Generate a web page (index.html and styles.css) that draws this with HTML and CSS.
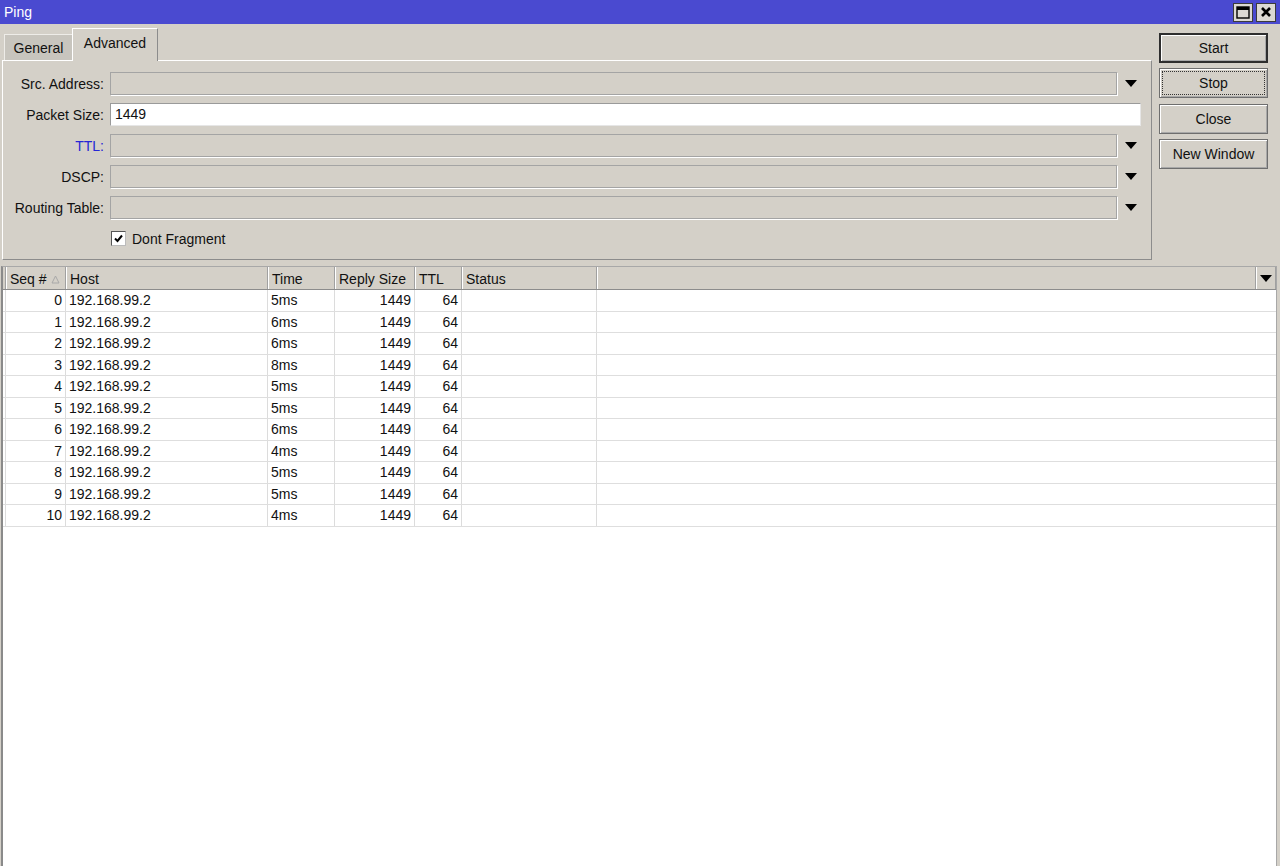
FILE: index.html
```html
<!DOCTYPE html>
<html lang="en">
<head>
    <meta charset="UTF-8">
    <title>Ping</title>
    <link rel="stylesheet" href="styles.css">
</head>
<body>
    <div class="titlebar">
        <span class="title">Ping</span>
        <div class="title-controls">
            <span class="tbtn">
                <svg width="14" height="13" viewBox="0 0 14 13"><rect x="1" y="1" width="12" height="11" fill="none" stroke="#000" stroke-width="1.4"/><rect x="1" y="1" width="12" height="3" fill="#000"/></svg>
            </span>
            <span class="tbtn">
                <svg width="12" height="12" viewBox="0 0 12 12"><path d="M2 2 L10 10 M10 2 L2 10" stroke="#000" stroke-width="2.6"/></svg>
            </span>
        </div>
    </div>

    <div class="main">
        <div class="left">
            <div class="tabs">
                <div class="tab">General</div>
                <div class="tab tab-active">Advanced</div>
            </div>
            <div class="panel">
                <div class="form-row">
                    <label>Src. Address:</label>
                    <div class="field"></div>
                    <div class="arrow"><svg width="12" height="7" viewBox="0 0 12 7"><polygon points="0,0 12,0 6,7" fill="#000"/></svg></div>
                </div>
                <div class="form-row">
                    <label>Packet Size:</label>
                    <div class="field field-edit">1449</div>
                </div>
                <div class="form-row">
                    <label class="blue">TTL:</label>
                    <div class="field"></div>
                    <div class="arrow"><svg width="12" height="7" viewBox="0 0 12 7"><polygon points="0,0 12,0 6,7" fill="#000"/></svg></div>
                </div>
                <div class="form-row">
                    <label>DSCP:</label>
                    <div class="field"></div>
                    <div class="arrow"><svg width="12" height="7" viewBox="0 0 12 7"><polygon points="0,0 12,0 6,7" fill="#000"/></svg></div>
                </div>
                <div class="form-row">
                    <label>Routing Table:</label>
                    <div class="field"></div>
                    <div class="arrow"><svg width="12" height="7" viewBox="0 0 12 7"><polygon points="0,0 12,0 6,7" fill="#000"/></svg></div>
                </div>
                <div class="form-row">
                    <span></span>
                    <div class="check-line">
                        <span class="checkbox"><svg width="11" height="11" viewBox="0 0 11 11"><path d="M2 5.5 L4.5 8 L9 2.5" fill="none" stroke="#000" stroke-width="2"/></svg></span>
                        Dont Fragment
                    </div>
                </div>
            </div>
        </div>

        <div class="buttons">
            <div class="btn btn-default">Start</div>
            <div class="btn btn-focus">Stop</div>
            <div class="btn">Close</div>
            <div class="btn">New Window</div>
        </div>
    </div>

    <div class="grid">
        <div class="grid-head">
            <div class="hcell gutter"></div>
            <div class="hcell">Seq # <svg class="sort" width="9" height="9" viewBox="0 0 9 9"><polygon points="4.5,1 8,8 1,8" fill="none" stroke="#a8a8a8"/></svg></div>
            <div class="hcell">Host</div>
            <div class="hcell">Time</div>
            <div class="hcell">Reply Size</div>
            <div class="hcell">TTL</div>
            <div class="hcell">Status</div>
            <div class="hcell"></div>
            <div class="hcell menu"><svg width="12" height="7" viewBox="0 0 12 7"><polygon points="0,0 12,0 6,7" fill="#000"/></svg></div>
        </div>
        <div id="rows"></div>
    </div>

    <script>
        const times = ['5ms', '6ms', '6ms', '8ms', '5ms', '5ms', '6ms', '4ms', '5ms', '5ms', '4ms'];
        const rows = document.getElementById('rows');

        times.forEach((t, i) => {
            const row = document.createElement('div');
            row.className = 'grid-row';
            row.innerHTML = `
                <div class="cell gutter"></div>
                <div class="cell num">${i}</div>
                <div class="cell">192.168.99.2</div>
                <div class="cell">${t}</div>
                <div class="cell num">1449</div>
                <div class="cell num">64</div>
                <div class="cell"></div>
                <div class="cell last"></div>
            `;
            rows.appendChild(row);
        });
    </script>
</body>
</html>
```

FILE: styles.css
```css
html, body {
    margin: 0;
    padding: 0;
    height: 100%;
}

body {
    background: #d4d0c8;
    font-family: "Liberation Sans", Arial, sans-serif;
    font-size: 14px;
    color: #111;
    display: flex;
    flex-direction: column;
    overflow: hidden;
}

.titlebar {
    height: 24px;
    flex: none;
    background: #4a4ad0;
    color: #fff;
    display: flex;
    justify-content: space-between;
    align-items: center;
}

.title {
    padding-left: 4px;
}

.title-controls {
    display: flex;
    gap: 3px;
    padding-right: 4px;
}

.tbtn {
    width: 18px;
    height: 17px;
    background: #dcd9d3;
    border: 1px solid #3c3c3c;
    display: flex;
    align-items: center;
    justify-content: center;
}

.main {
    display: flex;
    flex: none;
}

.left {
    width: 1152px;
}

.tabs {
    height: 36px;
    padding-left: 4px;
    display: flex;
    align-items: flex-end;
}

.tab {
    height: 26px;
    padding: 0 9px;
    width: 68px;
    box-sizing: border-box;
    background: #c8c5be;
    border-top: 1px solid #eeece8;
    border-left: 1px solid #eeece8;
    display: flex;
    align-items: center;
    justify-content: center;
    padding-top: 1px;
}

.tab-active {
    width: 86px;
    height: 33px;
    margin-bottom: -1px;
    background: #d4d0c8;
    border-top: 1px solid #fff;
    border-left: 1px solid #fff;
    border-right: 1px solid #8c8c8c;
    padding-top: 0;
    padding-bottom: 4px;
    position: relative;
    z-index: 1;
}

.panel {
    margin-left: 2px;
    width: 1150px;
    box-sizing: border-box;
    border-top: 1px solid #fff;
    border-left: 1px solid #fff;
    border-right: 1px solid #8c8c8c;
    border-bottom: 1px solid #8c8c8c;
    padding: 11px 0 9px 0;
    display: flex;
    flex-direction: column;
    gap: 8px;
}

.form-row {
    display: grid;
    grid-template-columns: 101px 1007px 34px;
    column-gap: 6px;
    height: 23px;
    align-items: center;
}

.form-row label {
    text-align: right;
}

.blue {
    color: #2626d6;
}

.field {
    height: 23px;
    box-sizing: border-box;
    border: 1px solid #a4a4a4;
    box-shadow: 1px 1px 0 #fff;
    padding: 0 4px;
    line-height: 21px;
}

.field-edit {
    grid-column: span 2;
    margin-right: 16px;
    background: #fff;
    border-color: #9a9a9a #e6e6e6 #e6e6e6 #9a9a9a;
    box-shadow: none;
}

.arrow {
    padding-left: 2px;
    display: flex;
    align-items: center;
}

.check-line {
    display: flex;
    align-items: center;
    gap: 6px;
    padding-left: 1px;
}

.checkbox {
    width: 13px;
    height: 13px;
    background: #fff;
    border: 1px solid #555;
    border-right-color: #bbb;
    border-bottom-color: #bbb;
    display: flex;
    align-items: center;
    justify-content: center;
}

.buttons {
    margin-left: 7px;
    padding-top: 9px;
    width: 109px;
    display: flex;
    flex-direction: column;
    gap: 5.3px;
}

.btn {
    height: 30px;
    box-sizing: border-box;
    border: 1px solid #6e6e6e;
    box-shadow: inset 1px 1px 0 #fff, inset -1px -1px 0 #a8a8a8;
    display: flex;
    align-items: center;
    justify-content: center;
}

.btn-default {
    border: 2px solid #2e2e2e;
}

.btn-focus {
    outline: 1px dotted #333;
    outline-offset: -4px;
}

.grid {
    flex: 1;
    margin: 6px 3px 0 1px;
    background: #fff;
    border-left: 2px solid #8a8a8a;
    border-right: 1px solid #a8a8a8;
    border-top: 1px solid #a8a8a8;
}

.grid-head {
    display: grid;
    grid-template-columns: 3px 60px 202px 67px 80px 47px 135px 1fr 20px;
    height: 23px;
    background: #d4d0c8;
    border-bottom: 1px solid #8c8c8c;
    box-sizing: border-box;
}

.hcell {
    border-left: 1px solid #fff;
    border-right: 1px solid #a0a0a0;
    padding-left: 3px;
    padding-top: 2px;
    display: flex;
    align-items: center;
    white-space: nowrap;
}

.hcell.gutter {
    padding: 0;
    border-left: none;
}

.sort {
    margin-left: 4px;
}

.hcell.menu {
    padding: 0;
    justify-content: center;
}

.grid-row {
    display: grid;
    grid-template-columns: 3px 60px 202px 67px 80px 47px 135px 1fr;
    height: 21.5px;
    box-sizing: border-box;
    border-bottom: 1px solid #dedede;
}

.cell {
    border-right: 1px solid #dcdcdc;
    padding-left: 3px;
    line-height: 20px;
    white-space: nowrap;
}

.cell.gutter {
    padding: 0;
}

.cell.num {
    text-align: right;
    padding: 0 3px 0 0;
}

.cell.last {
    border-right: none;
}
```
